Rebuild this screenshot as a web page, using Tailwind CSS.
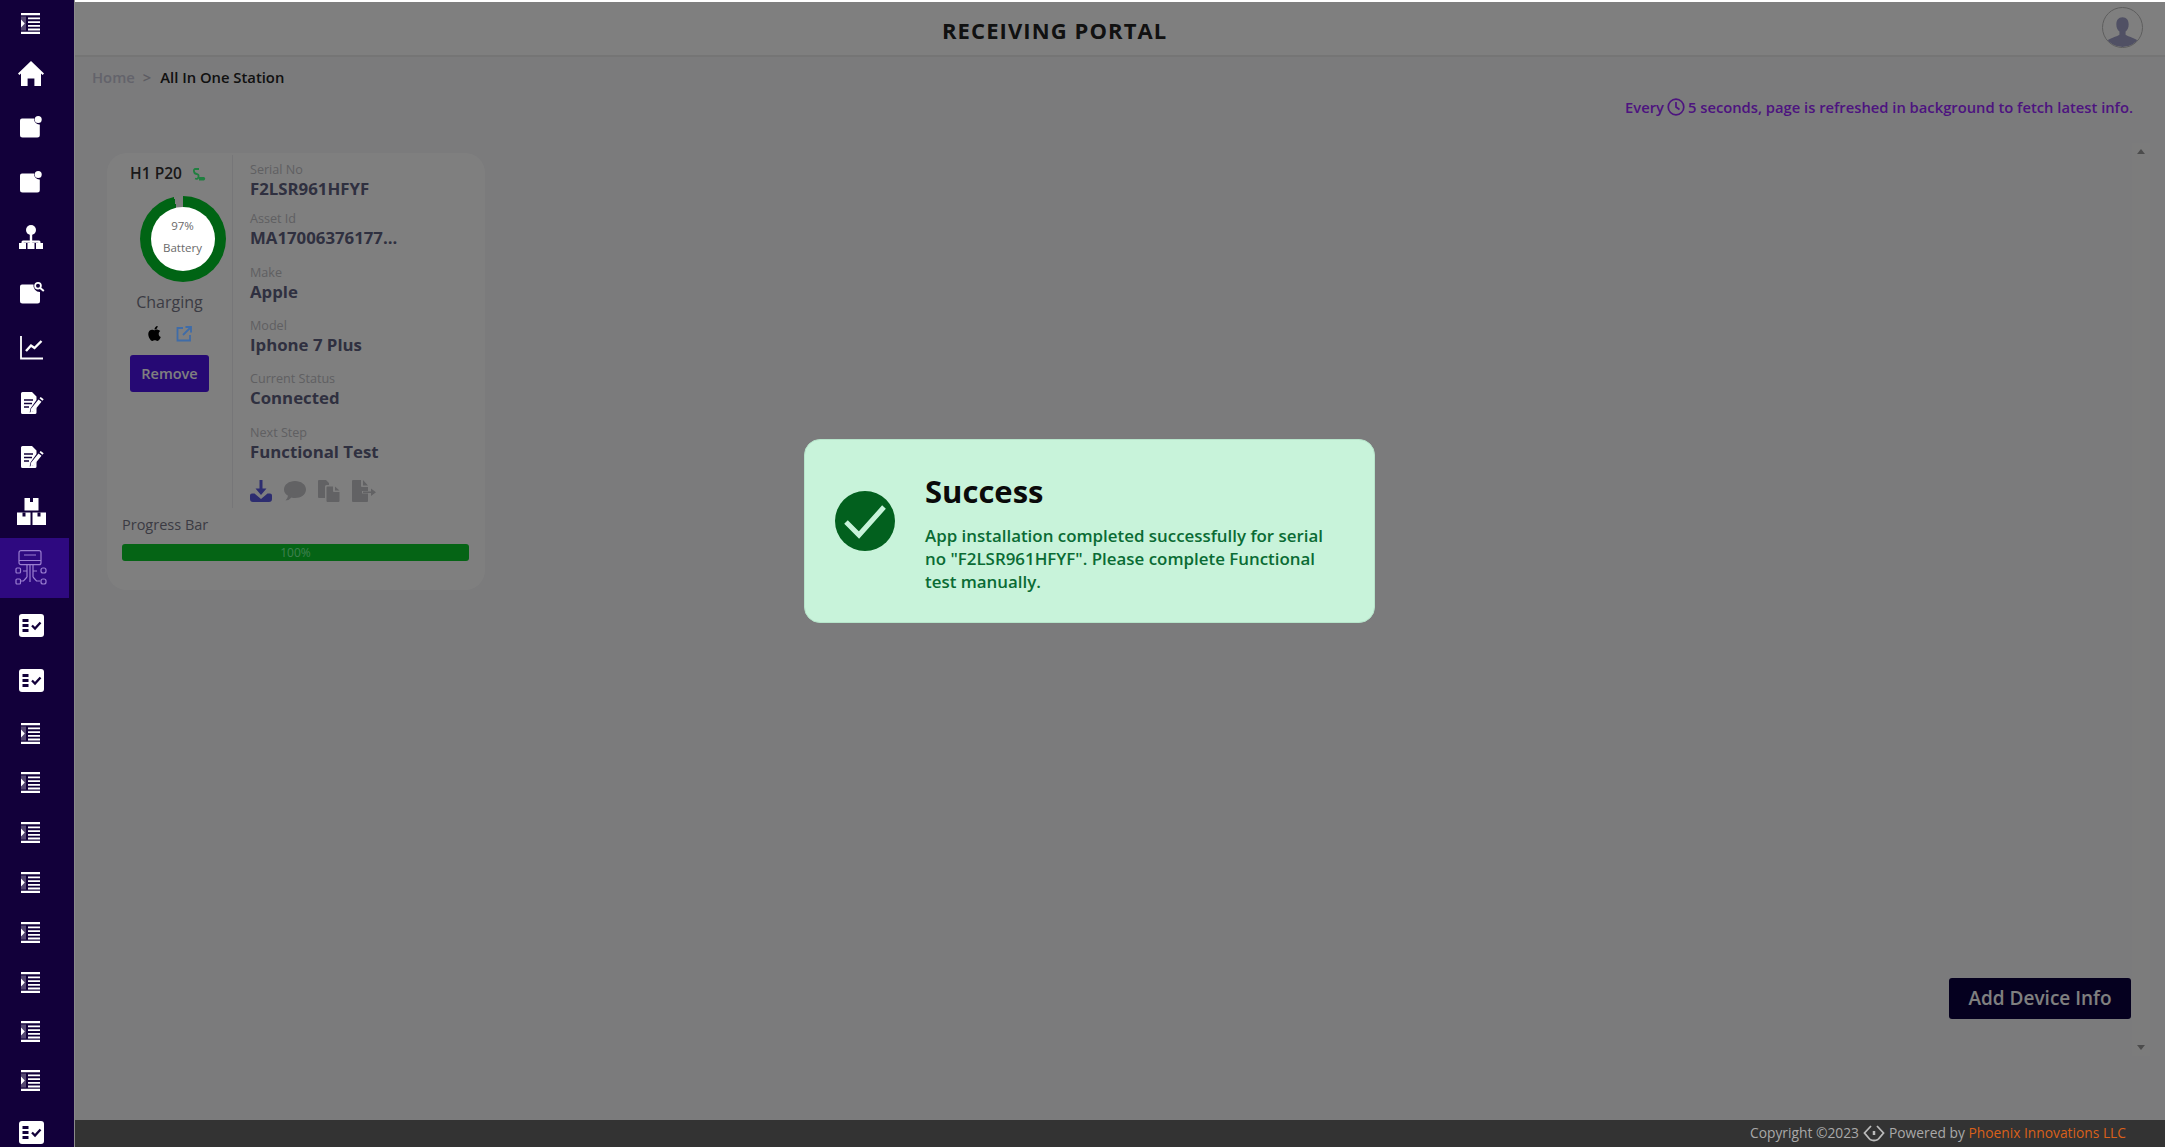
<!DOCTYPE html>
<html lang="en">
<head>
    <meta charset="UTF-8">
    <title>Receiving Portal</title>
    <script src="https://cdn.jsdelivr.net/npm/@tailwindcss/browser@4"></script>
</head>
<body class="font-['Open_Sans',sans-serif] bg-[#f6f6f8] overflow-hidden">
    <svg class="hidden">
        <symbol id="i-list" viewBox="0 0 20 21">
            <path fill="#fff" d="M0 0h19v2.2H0zM7 4.4h12v1.8H7zM7 8.2h12v1.8H7zM7 12h12v1.8H7zM7 15.6h12v1.8H7zM0 18.8h19V21H0zM0 6.5v8l3.8-4z"/>
            <path fill="#fff" d="M0 3.5h5v14H0z" opacity=".28"/>
        </symbol>
        <symbol id="i-home" viewBox="0 0 26 25">
            <path fill="#fff" d="M13 0 26 12.6l-1.4 1.3-1.6-1.4V25h-6.6v-7.4H9.6V25H3V12.500l-1.600 1.400L0 12.600z"/>
        </symbol>
        <symbol id="i-note" viewBox="0 0 22 22">
            <path fill="#fff" d="M2 2.500h12.200a5.200 5.200 0 0 0 5.600 6V19a2.500 2.500 0 0 1-2.500 2.500H2.500A2.500 2.500 0 0 1 0 19V4.500a2 2 0 0 1 2-2z"/>
            <circle fill="#fff" cx="18.200" cy="3.600" r="3.500"/>
        </symbol>
        <symbol id="i-tree" viewBox="0 0 24 27">
            <circle fill="#fff" cx="12" cy="5" r="5"/>
            <path fill="#fff" d="M10.800 9h2.400v6.500H20a1.500 1.500 0 0 1 1.500 1.500v3h-2.200v-2.300h-6.100V20h-2.400v-2.300H4.700V20H2.500v-3A1.500 1.500 0 0 1 4 15.500h6.800z"/>
            <path fill="#fff" d="M0 20h7v7H0zM8.500 20h7v7h-7zM17 20h7v7h-7z" transform="translate(0 1) scale(1 .85)"/>
        </symbol>
        <symbol id="i-note-search" viewBox="0 0 25 22">
            <path fill="#fff" d="M2 2.500h11.500a6.500 6.500 0 0 0 6.500 7.600V19a2.500 2.500 0 0 1-2.500 2.500h-15A2.500 2.500 0 0 1 0 19V4.500a2 2 0 0 1 2-2z"/>
            <circle fill="none" stroke="#fff" stroke-width="1.800" cx="18" cy="3.800" r="2.900"/>
            <path stroke="#fff" stroke-width="2" d="m20.200 6 3.600 3"/>
        </symbol>
        <symbol id="i-chart" viewBox="0 0 23 24">
            <path fill="none" stroke="#fff" stroke-width="1.800" d="M1 0v22.500h22"/>
            <path fill="none" stroke="#fff" stroke-width="2.400" d="m6 15 5-5.500 3.500 2.500 7-7"/>
        </symbol>
        <symbol id="i-doc" viewBox="0 0 23 22">
            <path fill="#fff" d="M1.500 0H11l4.500 4.500V8l-6 8.500-.8 4 3.800-1.500 3-3.500V20.500a1.500 1.500 0 0 1-1.500 1.500H1.500A1.500 1.500 0 0 1 0 20.500v-19A1.500 1.500 0 0 1 1.500 0z"/>
            <path stroke="#12003a" stroke-width="1.300" d="M3 8h9M3 11.500h8M3 15h5"/>
            <path fill="#fff" d="m17.500 7.500 3 2.200-7.500 9.300-3.500 1.500.5-3.700zM18.500 6.300l1.200-1.300 3 2.200-1.300 1.500z"/>
        </symbol>
        <symbol id="i-boxes" viewBox="0 0 29 27">
            <path fill="#fff" d="M7.500 0h14v12.500h-14zM0 14.500h13.500V27H0zM15.500 14.500H29V27H15.500z"/>
            <path fill="#12003a" d="M13 0h3v4h-3zM5.500 14.500h3v4h-3zM20.500 14.500h3v4h-3z"/>
        </symbol>
        <symbol id="i-station" viewBox="0 0 32 36">
            <g fill="none" stroke="#9a7fd0" stroke-width="1.200">
                <rect x="4" y=".7" width="22" height="14" rx="2"/>
                <path d="M4 10.500h22M9 5h12M12 15v12M15 15v17M18 15v12M12 21H8M18 21h4M12 27l-3.500 4H5M18 27l3.500 4H25"/>
                <rect x="1" y="18" width="4.500" height="5" rx="1"/>
                <rect x="26" y="18" width="5" height="5" rx="2"/>
                <rect x="1" y="29" width="4.500" height="5" rx="1"/>
                <rect x="26" y="29" width="5" height="5" rx="2"/>
            </g>
        </symbol>
        <symbol id="i-check" viewBox="0 0 25 23">
            <rect fill="#fff" width="25" height="23" rx="3"/>
            <path fill="#12003a" d="M3.500 5h6v3h-6zM3.500 10h6v3h-6zM3.500 15h6v3h-6z"/>
            <path fill="none" stroke="#12003a" stroke-width="2.300" d="m13 11.500 3 3 5.500-6"/>
        </symbol>
    </svg>

    <div class="flex h-[1147px] w-[2165px] bg-[#8a8a8a]">
        <!-- sidebar sits above the dimming layer -->
        <nav class="relative z-20 w-[74px] h-[1147px] shrink-0 bg-[#12003a] overflow-hidden flex flex-col">
            <a class="h-[46px] w-[62px] flex items-center justify-center"><svg class="w-[20px] h-[21px]"><use href="#i-list"/></svg></a>
            <a class="h-[54px] w-[62px] flex items-center justify-center"><svg class="w-[26px] h-[25px]"><use href="#i-home"/></svg></a>
            <a class="h-[54px] w-[62px] flex items-center justify-center"><svg class="w-[22px] h-[22px]"><use href="#i-note"/></svg></a>
            <a class="h-[56px] w-[62px] flex items-center justify-center"><svg class="w-[22px] h-[22px]"><use href="#i-note"/></svg></a>
            <a class="h-[56px] w-[62px] flex items-center justify-center"><svg class="w-[24px] h-[27px]"><use href="#i-tree"/></svg></a>
            <a class="h-[54px] w-[62px] flex items-center justify-center"><svg class="w-[25px] h-[22px] ml-[3px]"><use href="#i-note-search"/></svg></a>
            <a class="h-[56px] w-[62px] flex items-center justify-center"><svg class="w-[23px] h-[24px]"><use href="#i-chart"/></svg></a>
            <a class="h-[54px] w-[62px] flex items-center justify-center"><svg class="w-[23px] h-[22px] ml-[3px]"><use href="#i-doc"/></svg></a>
            <a class="h-[54px] w-[62px] flex items-center justify-center"><svg class="w-[23px] h-[22px] ml-[3px]"><use href="#i-doc"/></svg></a>
            <a class="h-[54px] w-[62px] flex items-center justify-center"><svg class="w-[29px] h-[27px]"><use href="#i-boxes"/></svg></a>
            <a class="h-[60px] w-[69px] pr-[7px] bg-[#2e0980] flex items-center justify-center"><svg class="w-[32px] h-[36px]"><use href="#i-station"/></svg></a>
            <a class="h-[54px] w-[62px] flex items-center justify-center"><svg class="w-[25px] h-[23px]"><use href="#i-check"/></svg></a>
            <a class="h-[56px] w-[62px] flex items-center justify-center"><svg class="w-[25px] h-[23px]"><use href="#i-check"/></svg></a>
            <a class="h-[50px] w-[62px] flex items-center justify-center"><svg class="w-[20px] h-[21px]"><use href="#i-list"/></svg></a>
            <a class="h-[48px] w-[62px] flex items-center justify-center"><svg class="w-[20px] h-[21px]"><use href="#i-list"/></svg></a>
            <a class="h-[52px] w-[62px] flex items-center justify-center"><svg class="w-[20px] h-[21px]"><use href="#i-list"/></svg></a>
            <a class="h-[48px] w-[62px] flex items-center justify-center"><svg class="w-[20px] h-[21px]"><use href="#i-list"/></svg></a>
            <a class="h-[52px] w-[62px] flex items-center justify-center"><svg class="w-[20px] h-[21px]"><use href="#i-list"/></svg></a>
            <a class="h-[48px] w-[62px] flex items-center justify-center"><svg class="w-[20px] h-[21px]"><use href="#i-list"/></svg></a>
            <a class="h-[50px] w-[62px] flex items-center justify-center"><svg class="w-[20px] h-[21px]"><use href="#i-list"/></svg></a>
            <a class="h-[48px] w-[62px] flex items-center justify-center"><svg class="w-[20px] h-[21px]"><use href="#i-list"/></svg></a>
            <a class="h-[43px] w-[62px] pt-[17px] flex justify-center shrink-0"><svg class="w-[25px] h-[23px]"><use href="#i-check"/></svg></a>
        </nav>

        <div class="relative flex-1 flex flex-col ml-[1px] bg-[#f6f6f8]">
            <header class="h-[57px] shrink-0 bg-white border-b-2 border-[#eaeaea] flex items-center justify-between">
                <h1 class="ml-[867px] mt-[4px] text-[22px] leading-[28px] font-bold tracking-[1.1px] text-[#222]">RECEIVING PORTAL</h1>
                <span class="mr-[22px] w-[41px] h-[41px] rounded-full border border-[#bbb] overflow-hidden flex justify-center">
                    <svg class="w-[39px] h-[39px]" viewBox="0 0 38 38"><path fill="#a0a0c8" d="M19 9c4 0 6 3 6 7 0 3-1 5-3 7v3c3 2 9 3 12 6-3 4-9 6-15 6S7 36 4 32c3-3 9-4 12-6v-3c-2-2-3-4-3-7 0-4 2-7 6-7z"/></svg>
                </span>
            </header>

            <div class="flex-1 flex flex-col px-[17px] relative">
                <div class="h-[40px] flex items-center text-[14.800px] font-semibold">
                    <a class="text-[#c6c6d6]">Home</a>
                    <span class="ml-[8px] text-[#b8b8c4]">&gt;</span>
                    <span class="ml-[9px] text-[#222]">All In One Station</span>
                </div>
                <p class="flex items-center justify-end mr-[15px] h-[20px] text-[14.750px] font-semibold text-[#9a28ff]">
                    Every
                    <svg class="w-[18px] h-[18px] mx-[3px]" viewBox="0 0 18 18" fill="none" stroke="#9a28ff" stroke-width="1.700"><circle cx="9" cy="9" r="7.800"/><path d="M9 4v5l3.500 2.500"/></svg>
                    5 seconds, page is refreshed in background to fetch latest info.
                </p>

                <!-- device card -->
                <div class="mt-[36px] ml-[15px] w-[378px] h-[437px] rounded-[20px] bg-white flex flex-col">
                    <div class="flex h-[353px] mt-[2px]">
                        <div class="w-[126px] shrink-0 border-r border-[#ececf0] flex flex-col items-center">
                            <div class="mt-[9px] mr-[2px] flex items-center h-[20px] text-[15.500px] font-semibold text-[#333]">
                                H1 P20
                                <svg class="w-[15px] h-[15px] ml-[10px] mt-[3px]" viewBox="0 0 15 15" fill="none" stroke="#40ff80" stroke-width="1.800"><path d="M7 1H3.500Q1.500 1 2 3.500T5 6q2 .5 1.500 3T3 10.500"/><path fill="#40ff80" stroke="none" d="M7 9h5q2.500 1.500 0 3.500H7z"/></svg>
                            </div>
                            <div class="relative z-20 mt-[12px] ml-[26px] w-[86px] h-[86px] rounded-full bg-[conic-gradient(#006414_0_348deg,#808080_348deg_360deg)] flex items-center justify-center">
                                <div class="w-[64px] h-[64px] rounded-full bg-white flex flex-col items-center text-[11.500px] text-[#6a6a6a] leading-[16px]">
                                    <span class="mt-[11px]">97%</span>
                                    <span class="mt-[6px]">Battery</span>
                                </div>
                            </div>
                            <span class="mt-[9px] text-[16px] leading-[22px] text-[#777787]">Charging</span>
                            <div class="mt-[12px] flex items-center gap-[14px]">
                                <svg class="w-[15px] h-[17px]" viewBox="0 0 384 512"><path fill="#000" d="M318.700 268.700c-.2-36.700 16.400-64.400 50-84.800-18.800-26.900-47.200-41.700-84.700-44.600-35.500-2.800-74.300 20.700-88.500 20.700-15 0-49.400-19.700-76.400-19.700C63.300 141.200 4 184.800 4 273.500c0 26.200 4.800 53.300 14.400 81.200 12.800 36.700 59 126.700 107.200 125.200 25.200-.6 43-17.900 75.800-17.900 31.800 0 48.300 17.900 76.400 17.900 48.600-.7 90.400-82.500 102.600-119.300-65.200-30.700-61.700-90-61.700-91.900zm-56.600-164.200c27.300-32.400 24.800-61.900 24-72.500-24.100 1.400-52 16.400-67.900 34.900-17.500 19.800-27.800 44.300-25.600 71.900 26.100 2 49.900-11.400 69.500-34.300z"/></svg>
                                <svg class="relative z-20 w-[16px] h-[16px]" viewBox="0 0 16 16" fill="none" stroke="#3f6ca8" stroke-width="1.800"><path d="M7 2H1.500v12.500H14V9M9.500 1H15v5.500M15 1 7 9"/></svg>
                            </div>
                            <button class="mt-[13px] w-[79px] h-[37px] rounded-[3px] bg-[#4c12e8] text-white text-[14.500px] font-semibold">Remove</button>
                        </div>
                        <div class="pl-[17px] pt-[7px] flex flex-col">
                            <span class="text-[12.600px] leading-[16px] text-[#c0c0c4]">Serial No</span>
                            <span class="text-[16.800px] leading-[21px] font-bold text-[#5e6080]">F2LSR961HFYF</span>
                            <span class="mt-[12px] text-[12.600px] leading-[16px] text-[#c0c0c4]">Asset Id</span>
                            <span class="text-[16.800px] leading-[21px] font-bold text-[#5e6080]">MA17006376177...</span>
                            <span class="mt-[17px] text-[12.600px] leading-[16px] text-[#c0c0c4]">Make</span>
                            <span class="text-[16.800px] leading-[21px] font-bold text-[#5e6080]">Apple</span>
                            <span class="mt-[16px] text-[12.600px] leading-[16px] text-[#c0c0c4]">Model</span>
                            <span class="text-[16.800px] leading-[21px] font-bold text-[#5e6080]">Iphone 7 Plus</span>
                            <span class="mt-[16px] text-[12.600px] leading-[16px] text-[#c0c0c4]">Current Status</span>
                            <span class="text-[16.800px] leading-[21px] font-bold text-[#5e6080]">Connected</span>
                            <span class="mt-[17px] text-[12.600px] leading-[16px] text-[#c0c0c4]">Next Step</span>
                            <span class="text-[16.800px] leading-[21px] font-bold text-[#5e6080]">Functional Test</span>
                            <div class="mt-[18px] flex items-center gap-[12px]">
                                <svg class="w-[22px] h-[22px]" viewBox="0 0 22 22"><path fill="#5a5ae0" d="M9.500 0h3v8.500h4L11 15 5.500 8.500h4zM0 15.500q0-2 2-2h2.500L11 19l6.500-5.500H20q2 0 2 2V19q0 3-3 3H3q-3 0-3-3z"/></svg>
                                <svg class="w-[22px] h-[20px]" viewBox="0 0 22 20"><path fill="#c4c4c8" d="M11 0c6 0 11 3.500 11 8.500S17 17 11 17q-2 0-3.500-.5Q5 19.500 1.500 19.500 3.800 17 4 14.800 0 12.500 0 8.500C0 3.500 5 0 11 0z"/></svg>
                                <svg class="w-[22px] h-[22px]" viewBox="0 0 22 22"><path fill="#c4c4c8" d="M1 0h7l3 3v2H8.500A1.500 1.500 0 0 0 7 6.500V18H1a1 1 0 0 1-1-1V1a1 1 0 0 1 1-1zM9.500 6.500H15V11q0 1 1 1h5.500v9a1 1 0 0 1-1 1h-11a1 1 0 0 1-1-1V7.500a1 1 0 0 1 1-1zM17 6.500l4.500 4H17z"/></svg>
                                <svg class="w-[24px] h-[22px]" viewBox="0 0 24 22"><path fill="#c4c4c8" d="M1 0h8v6q0 1 1 1h6v4h-6v2.500h6V21a1 1 0 0 1-1 1H1a1 1 0 0 1-1-1V1a1 1 0 0 1 1-1zM11 0l5 5.500h-5zM11 11.500h8V8.500l5 3.700-5 3.800v-3h-8z"/></svg>
                            </div>
                        </div>
                    </div>
                    <span class="ml-[15px] mt-[7px] text-[14.500px] leading-[20px] text-[#777787]">Progress Bar</span>
                    <div class="ml-[15px] mt-[9px] w-[347px] h-[17px] rounded-[3px] bg-[#0ac82a] flex items-center justify-center text-[12px] text-[#7effa0]">100%</div>
                </div>

                <button class="absolute right-[34px] top-[921px] w-[182px] h-[41px] rounded-[3px] bg-[#0a003e] text-white text-[19px] font-semibold">Add Device Info</button>
                <div class="absolute right-[15px] top-[86px] w-[18px] h-[913px] bg-[#f9f9f9] flex flex-col items-center justify-between py-[6px]">
                    <span class="w-0 h-0 border-x-[4px] border-x-transparent border-b-[5px] border-b-[#999]"></span>
                    <span class="w-0 h-0 border-x-[4px] border-x-transparent border-t-[5px] border-t-[#999]"></span>
                </div>
            </div>

            <!-- dimming layer with the toast -->
            <div class="absolute inset-0 top-[2px] bg-black/50 z-10 pt-[437px] pl-[729px]">
                <div class="w-[571px] h-[184px] rounded-[16px] bg-[#c8f3da] border border-[#b6e4ca] flex">
                    <svg class="ml-[30px] mt-[51px] w-[60px] h-[60px] shrink-0" viewBox="0 0 60 60">
                        <circle cx="30" cy="30" r="30" fill="#02601e"/>
                        <path fill="none" stroke="#c8f3da" stroke-width="5" d="m11 31 13 13 25-28"/>
                    </svg>
                    <div class="ml-[30px] pt-[29px] flex flex-col">
                        <h2 class="text-[31px] leading-[44px] font-bold text-[#0a0a0a]">Success</h2>
                        <p class="mt-[11px] w-[410px] text-[16.900px] leading-[23px] font-semibold text-[#0a6b34]">App installation completed successfully for serial no "F2LSR961HFYF". Please complete Functional test manually.</p>
                    </div>
                </div>
            </div>

            <footer class="relative z-20 h-[27px] shrink-0 bg-[#333] flex items-center justify-end pr-[39px] pb-[1px] text-[13.800px] text-[#a9a9a9]">
                <span>Copyright ©2023</span>
                <svg class="w-[22px] h-[18px] mx-[4px]" viewBox="0 0 22 18" fill="none" stroke="#bbb" stroke-width="1.800"><path d="M8 2 1.500 9 7 15.500M14 2l6.500 7L15 15.500M7 15.500q4 2 8 0"/><path d="M11 7v4" stroke-width="2.500"/></svg>
                <span>Powered by&nbsp;</span>
                <span class="text-[#d9601a]">Phoenix Innovations LLC</span>
            </footer>
        </div>
    </div>
</body>
</html>
